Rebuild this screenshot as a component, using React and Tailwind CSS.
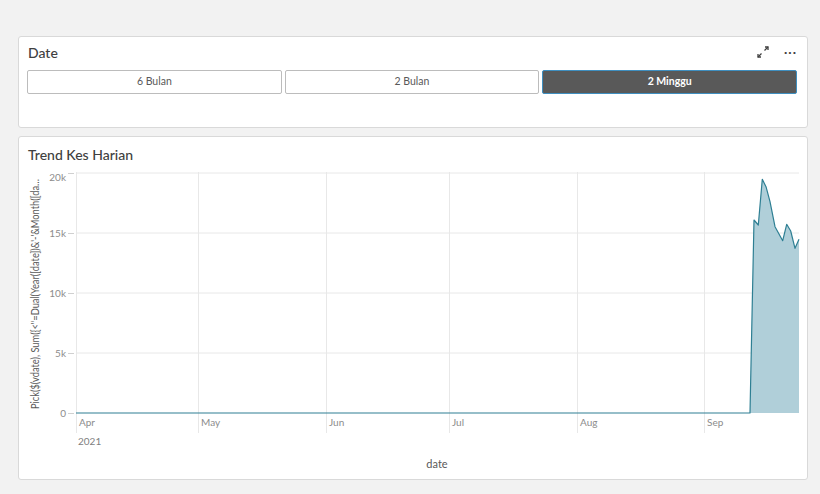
const months = [
  { label: "Apr", x: 76 },
  { label: "May", x: 198 },
  { label: "Jun", x: 326 },
  { label: "Jul", x: 449 },
  { label: "Aug", x: 577 },
  { label: "Sep", x: 704 },
];

const yTicks = [
  { label: "20k", y: 173, ly: 181 },
  { label: "15k", y: 233, ly: 237 },
  { label: "10k", y: 293, ly: 297 },
  { label: "5k", y: 353, ly: 357 },
  { label: "0", y: 413, ly: 417 },
];

// page coordinates of the spike at the end
const spike = [
  [750, 413],
  [754, 220],
  [758.3, 225],
  [762.3, 179.3],
  [766, 186.7],
  [770, 201.7],
  [775, 226.7],
  [779, 234],
  [782.7, 240.7],
  [786.7, 224.3],
  [790.7, 231],
  [795, 248.3],
  [799, 239.3],
];

// svg origin sits at page (19, 169)
const OX = 19;
const OY = 169;
const px = (x) => x - OX;
const py = (y) => y - OY;

const TrendChart = () => {
  const linePts = [[76, 413], ...spike].map(([x, y]) => `${px(x)},${py(y)}`).join(" ");
  const areaPts =
    [[76, 413], ...spike, [799, 413]].map(([x, y]) => `${px(x)},${py(y)}`).join(" ");

  return (
    <svg width="788" height="310" className="block" style={{ fontFamily: "Lato, 'Liberation Sans', sans-serif" }}>
      {/* horizontal grid */}
      {yTicks.slice(0, 4).map((t) => (
        <line key={t.label} x1={px(76)} x2={px(799)} y1={py(t.y)} y2={py(t.y)} stroke="#e8e8e8" strokeWidth="1" />
      ))}
      {/* vertical grid */}
      {months.map((m) => (
        <line key={m.label} x1={px(m.x) + 0.5} x2={px(m.x) + 0.5} y1={py(172)} y2={py(433)} stroke="#e8e8e8" strokeWidth="1" />
      ))}
      {/* y labels + ticks */}
      {yTicks.map((t) => (
        <g key={t.label}>
          <text x={px(66)} y={py(t.ly)} textAnchor="end" fontSize="10" fill="#8c8c8c">
            {t.label}
          </text>
          <line x1={px(68)} x2={px(74)} y1={py(t.y) + 0.5} y2={py(t.y) + 0.5} stroke="#d0d0d0" strokeWidth="1" />
        </g>
      ))}
      {/* month labels */}
      {months.map((m) => (
        <text key={m.label} x={px(m.x) + 3} y={py(426)} fontSize="10" fill="#8c8c8c">
          {m.label}
        </text>
      ))}
      <text x={px(78)} y={py(445)} fontSize="10" fill="#808080">
        2021
      </text>
      <text x={px(437)} y={py(468)} textAnchor="middle" fontSize="11" fill="#595959">
        date
      </text>
      <text
        transform={`translate(${px(39)},${py(294)}) rotate(-90)`}
        textAnchor="middle"
        fontSize="10.5"
        fill="#595959"
        textLength="230"
        lengthAdjust="spacingAndGlyphs"
      >
        {`Pick($(vdate), Sum({<"=Dual(Year([date])&'-'&Month([da…`}
      </text>
      {/* data */}
      <polygon points={areaPts} fill="#b0cfd9" />
      <polyline points={linePts} fill="none" stroke="#2e7f93" strokeWidth="1.2" strokeLinejoin="round" />
    </svg>
  );
};

const ExpandIcon = () => (
  <svg width="12" height="12" viewBox="0 0 12 12" fill="none" stroke="#404040" strokeWidth="1.3">
    <path d="M11 1 L7.5 4.5" />
    <path d="M8 1 H11 V4" />
    <path d="M1 11 L4.5 7.5" />
    <path d="M1 8 V11 H4" />
  </svg>
);

const App = () => {
  return (
    <div
      className="w-[820px] h-[494px] bg-[#f2f2f2] pt-[36px] pl-[18px] overflow-hidden"
      style={{ fontFamily: "Lato, 'Liberation Sans', sans-serif" }}
    >
      <div className="w-[790px] h-[92px] bg-white border border-[#d9d9d9] rounded-[3px]">
        <div className="flex items-center justify-between h-[32px] pl-[9px] pr-[10px]">
          <h3 className="text-[14px] font-medium text-[#404040] -mt-[2px]">Date</h3>
          <div className="flex items-center gap-[15px] -mt-[2px]">
            <ExpandIcon />
            <span className="text-[#404040] text-[14px] font-bold tracking-[1px] leading-none -mt-[6px]">...</span>
          </div>
        </div>
        <div className="flex gap-[3px] pl-[8px] pr-[10px] pt-[1px]">
          <button className="flex-1 h-[24px] border border-[#bcbcbc] rounded-[2px] bg-white text-[10.5px] text-[#595959]">
            6 Bulan
          </button>
          <button className="flex-1 h-[24px] border border-[#bcbcbc] rounded-[2px] bg-white text-[10.5px] text-[#595959]">
            2 Bulan
          </button>
          <button className="flex-1 h-[24px] border border-[#3f8fc0] rounded-[2px] bg-[#595959] text-[10.5px] font-bold text-white">
            2 Minggu
          </button>
        </div>
      </div>

      <div className="mt-[8px] w-[790px] h-[344px] bg-white border border-[#d9d9d9] rounded-[3px]">
        <div className="h-[32px] pl-[9px] flex items-center">
          <h3 className="text-[14px] font-medium text-[#404040] pt-[2px]">Trend Kes Harian</h3>
        </div>
        <TrendChart />
      </div>
    </div>
  );
};

export default App;
